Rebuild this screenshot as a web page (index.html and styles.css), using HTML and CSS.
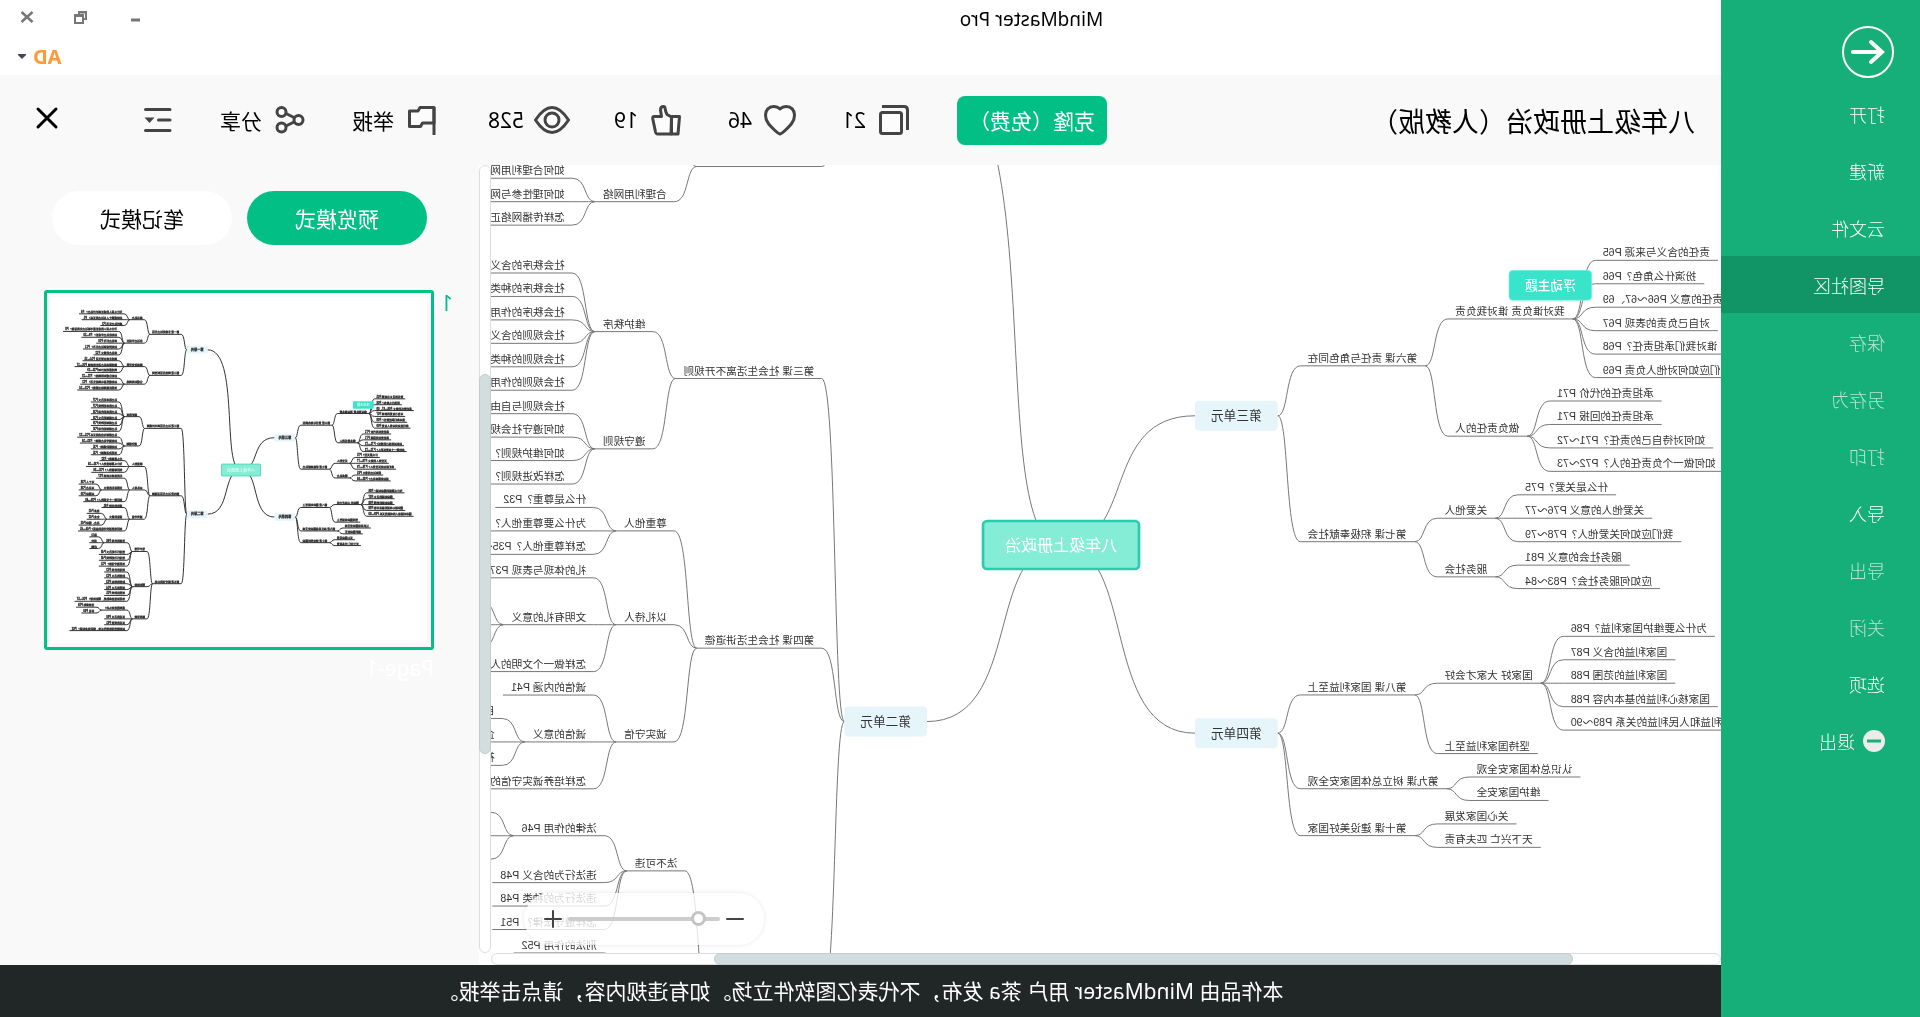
FILE: index.html
```html
<!DOCTYPE html>
<html lang="zh-CN">
<head>
<meta charset="utf-8">
<title>MindMaster Pro</title>
<link rel="stylesheet" href="styles.css">
</head>
<body>
<div class="app">
  <nav class="sidebar">
    <button class="back" aria-label="返回">
      <svg width="54" height="54" viewBox="0 0 54 54"><circle cx="27" cy="27" r="25"/><path class="arrow" d="M42 27H13M24 17L13 27L24 37"/></svg>
    </button>
    <a class="item" href="#">打开</a>
    <a class="item" href="#">新建</a>
    <a class="item" href="#">云文件</a>
    <a class="item active" href="#">导图社区</a>
    <a class="item dim" href="#">保存</a>
    <a class="item dim" href="#">另存为</a>
    <a class="item dim" href="#">打印</a>
    <a class="item" href="#">导入</a>
    <a class="item dim" href="#">导出</a>
    <a class="item dim" href="#">关闭</a>
    <a class="item" href="#">选项</a>
    <a class="item" href="#"><svg class="exit" width="22" height="22" viewBox="0 0 22 22"><circle cx="11" cy="11" r="11"/><path d="M4 11H18"/></svg>退出</a>
  </nav>

  <div class="main">
    <header class="titlebar">
      <div class="row">
        <h1 class="apptitle">MindMaster Pro</h1>
        <div class="wincontrols">
          <button aria-label="最小化"><svg width="14" height="14" viewBox="0 0 14 14"><path d="M2 10H11" stroke-width="3"/></svg></button>
          <button aria-label="还原"><svg width="14" height="14" viewBox="0 0 14 14"><path d="M5 9H2V2H9V5M1 2.500H10" /><path d="M5 5H13V13H5ZM5 6H13"/></svg></button>
          <button aria-label="关闭窗口"><svg width="14" height="14" viewBox="0 0 14 14"><path d="M1.500 2L12.500 12M12.500 2L1.500 12" stroke-width="2.500"/></svg></button>
        </div>
      </div>
      <div class="row account">
        <button class="user">AD<svg width="8" height="5" viewBox="0 0 8 5"><path d="M0 0H8V1L4 5L0 1Z"/></svg></button>
      </div>
    </header>

    <div class="toolbar">
      <h2 class="doctitle">八年级上册政治（人教版）</h2>
      <button class="clone">克隆（免费）</button>
      <div class="actions">
        <button class="action"><svg class="icon" viewBox="0 0 36 36"><path d="M30 4.500H8Q4.500 4.500 4.500 8V28"/><rect class="blank" x="10.500" y="10.500" width="21" height="21" rx="2"/></svg>21</button>
        <button class="action"><svg class="icon" viewBox="0 0 36 36"><path class="blank" d="M18 32Q16 31.500 13 28.500C7 23 3.500 19 3.500 13C3.500 8 7 4.500 11.500 4.500C14.500 4.500 16.500 5.500 18 7C19.500 5.500 21.500 4.500 24.500 4.500C29 4.500 32.500 8 32.500 13C32.500 19 29 23 23 28.500Q20 31.500 18 32Z"/></svg>46</button>
        <button class="action"><svg class="icon" viewBox="0 0 36 36"><path class="blank" d="M12.500 15L17 12.500Q18.500 10 19 6Q19.200 4.500 20.500 4.500Q23.500 4.500 23.500 8L22.500 14.500H30Q31.500 14.500 31.300 16.500L28.500 30Q28 32 26.500 32H13Z"/><path class="blank" d="M4.500 14.500H12.500V32H6Z"/></svg>19</button>
        <button class="action wide"><svg class="icon" viewBox="0 0 36 36"><path class="blank" d="M1.500 18C8 8 13 5.500 18 5.500S28 8 34.500 18C28 28 23 30.500 18 30.500S8 28 1.500 18Z"/><circle class="blank" cx="18" cy="18" r="7"/></svg>528</button>
        <button class="action"><svg class="icon" viewBox="0 0 36 36"><path class="blank" d="M6 21V5.500H20L22 9H30.500V24.500H19.500L17.500 21Z"/><path d="M6 5V33"/></svg>举报</button>
        <button class="action"><svg class="icon" viewBox="0 0 36 36"><path d="M14 15.500L22 11.500M14 20L22 24"/><circle class="blank" cx="9.500" cy="18" r="4.500"/><circle class="blank" cx="26.500" cy="10" r="4.500"/><circle class="blank" cx="26.500" cy="25.500" r="4.500"/></svg>分享</button>
        <button class="action" aria-label="目录"><svg class="icon" viewBox="0 0 36 36"><path stroke-linecap="round" d="M6 7.500H30.500M6 18H17.500M6 28.500H30.500"/><path class="solid" d="M21.500 15.500H31.500L26.500 21Z"/></svg></button>
        <button class="action close" aria-label="关闭"><svg class="icon" viewBox="0 0 36 36"><path stroke-linecap="round" d="M9 7L27 25M27 7L9 25"/></svg></button>
      </div>
    </div>

    <div class="workspace">
      <div class="canvas">
        <svg class="map"><g id="map"></g></svg>
        <div class="zoombar">
          <button aria-label="缩小"><svg width="18" height="18" viewBox="0 0 18 18"><path d="M1 9H17"/></svg></button>
          <input type="range" min="0" max="100" value="10" aria-label="缩放">
          <button aria-label="放大"><svg width="18" height="18" viewBox="0 0 18 18"><path d="M1 9H17M9 1V17"/></svg></button>
        </div>
      </div>
      <div class="scroll vertical"><div class="thumb"></div></div>
      <div class="scroll horizontal"><div class="thumb"></div></div>
      <aside class="panel">
        <div class="modes">
          <button class="mode on">预览模式</button>
          <button class="mode">笔记模式</button>
        </div>
        <div class="page">
          <span class="num">1</span>
          <button class="preview" aria-label="Page-1"><svg viewBox="0 0 376 346"><use href="#map"/></svg></button>
          <span class="name">Page-1</span>
        </div>
      </aside>
    </div>

    <footer class="notice">本作品由 MindMaster 用户 茶a 发布，不代表亿图软件立场。如有违规内容，请点击举报。</footer>
  </div>
</div>
<script src="map.js"></script>
</body>
</html>
```

FILE: styles.css
```css
* { box-sizing: border-box; }

body {
  margin: 0;
  background: #fff;
  color: #000;
  font-family: "Noto Sans", "Noto Sans CJK SC", sans-serif;
  font-size: 21px;
}

button {
  margin: 0;
  padding: 0;
  border: 0;
  background: none;
  color: inherit;
  font: inherit;
  cursor: pointer;
}

svg { display: block; flex: none; }

h1, h2 { margin: 0; font-weight: 400; }

.app {
  display: flex;
  height: 100vh;
  transform: scaleX(-1);
}

/* file menu */
.sidebar {
  flex: 0 0 199px;
  background: #16ae79;
  color: #fff;
  font-family: "Noto Sans CJK SC", sans-serif;
  font-size: 18px;
  font-weight: 300;
}

.back { display: block; margin: 25px 0 6px 25px; }
.back svg { fill: none; stroke: #fff; stroke-width: 2; }
.back .arrow { stroke-width: 4; stroke-linecap: round; }

.item {
  display: flex;
  align-items: center;
  gap: 8px;
  height: 57px;
  padding: 0 0 0 35px;
  color: #fff;
  text-decoration: none;
}
.item.active { background: #129566; }
.item.dim { color: #b5e5d3; }
.exit { fill: #ececec; stroke: #16ae79; stroke-width: 3; }
.exit circle { stroke: none; }

/* window frame */
.main {
  flex: 1;
  min-width: 0;
  display: flex;
  flex-direction: column;
}

.titlebar { flex: 0 0 75px; }
.row { display: flex; align-items: center; height: 34px; }
.apptitle {
  flex: 1;
  padding-top: 4px;
  text-align: center;
  font-size: 19px;
  line-height: 30px;
}
.wincontrols { flex: 0 0 342px; display: flex; justify-content: flex-end; }
.wincontrols button { width: 54px; display: flex; justify-content: center; }
.wincontrols svg { fill: none; stroke: #777; stroke-width: 2; }

.account { height: 41px; justify-content: flex-end; padding: 4px 18px 0 0; }
.user {
  display: flex;
  align-items: center;
  gap: 7px;
  color: #ff9a35;
  font-size: 20px;
  font-weight: 700;
  line-height: 24px;
}
.user svg { fill: #445; }

/* document toolbar */
.toolbar {
  flex: 0 0 90px;
  display: flex;
  align-items: center;
  padding: 0 29px 0 26px;
  background: #f9f9f9;
}
.doctitle {
  flex: 1;
  font-family: "Noto Sans CJK SC", sans-serif;
  font-size: 27px;
  white-space: nowrap;
}
.clone {
  width: 150px;
  height: 49px;
  margin-right: 45px;
  border-radius: 8px;
  background: #02bf86;
  color: #fff;
  white-space: nowrap;
}
.actions { display: flex; gap: 44px; }
.action { display: flex; align-items: center; gap: 10px; height: 36px; }
.action.wide { width: 86px; }
.action.close { margin-left: 31px; }
.icon {
  width: 36px;
  height: 36px;
  fill: none;
  stroke: #444;
  stroke-width: 3;
  stroke-linejoin: round;
}
.icon .blank { fill: #fcfcfc; }
.icon .solid { fill: #444; stroke: none; }
.close .icon { stroke: #000; }

/* work area */
.workspace {
  flex: 1;
  min-height: 0;
  display: grid;
  grid-template-columns: minmax(0, 1fr) 12px 479px;
  grid-template-rows: minmax(0, 1fr) 12px;
}
.canvas { position: relative; overflow: hidden; }
.map { width: 100%; height: 100%; }
.panel { grid-column: 3; grid-row: 1 / 3; background: #f9f9f9; }

.scroll { display: grid; border: 1px solid #ddd; border-radius: 6px; background: #fff; }
.scroll .thumb { border-radius: 6px; background: #d3dcde; border: 1px solid #c3cccd; margin: -1px; }
.vertical { grid-column: 2; grid-row: 1; grid-template-rows: 210fr 378fr 200fr; }
.vertical .thumb { grid-row: 2; }
.horizontal { grid-column: 1; grid-row: 2; grid-template-columns: 148fr 859fr 223fr; }
.horizontal .thumb { grid-column: 2; }

.zoombar {
  position: absolute;
  right: 33px;
  bottom: 8px;
  display: flex;
  align-items: center;
  gap: 6px;
  width: 240px;
  height: 52px;
  padding: 0 20px;
  border-radius: 26px;
  background: rgba(255, 255, 255, .8);
  box-shadow: 0 0 5px rgba(0, 0, 0, .1);
}
.zoombar svg { fill: none; stroke: #444; stroke-width: 2; stroke-linecap: round; }
.zoombar input {
  flex: 1;
  min-width: 0;
  height: 16px;
  margin: 0;
  appearance: none;
  background: none;
}
.zoombar input::-webkit-slider-runnable-track { height: 4px; border-radius: 2px; background: #ccc; }
.zoombar input::-webkit-slider-thumb {
  appearance: none;
  width: 15px;
  height: 15px;
  margin-top: -6px;
  border: 3px solid #c4c4c4;
  border-radius: 50%;
  background: #fff;
}

/* mind map */
#map {
  font-family: "Liberation Sans", "Noto Sans CJK SC", sans-serif;
  font-size: 16px;
  fill: #333;
}
#map path {
  fill: none;
  stroke: var(--line, #777);
  stroke-width: 1px;
  vector-effect: non-scaling-stroke;
}
#map .unit rect { fill: #e6f5f9; stroke: none; }
#map .unit text, #map .float text { font-size: 19px; text-anchor: middle; }
#map .root rect { fill: #85ecd6; stroke: #2dcbad; stroke-width: 4px; }
#map .root text { font-size: 24px; text-anchor: middle; fill: #fff; stroke: none; }
#map .float rect { fill: #38e5cb; stroke: #7ff0df; stroke-width: 1px; }
#map .float text { fill: #fff; font-weight: 500; stroke: none; }

/* page list */
.modes { display: flex; justify-content: center; gap: 15px; padding: 26px 0 45px; }
.mode { width: 180px; height: 54px; border-radius: 27px; background: #fff; }
.mode.on { background: #02bf86; color: #fff; }

.page {
  display: grid;
  grid-template-columns: 19px 390px;
  justify-content: start;
  padding-left: 26px;
  line-height: 26px;
}
.num { color: #02bf86; }
.preview {
  height: 360px;
  padding: 4px;
  border: 3px solid #02bf86;
  border-radius: 3px;
}
.preview svg { width: 100%; height: 100%; background: #fff; }
.preview use {
  --line: #333;
  transform: translate(186px, 173px) scale(.25) translate(-660px, -380px);
  stroke: #333;
  stroke-width: 2px;
}
.name { grid-column: 2; margin-top: 5px; color: #fff; }

.notice {
  flex: 0 0 52px;
  background: #212627;
  color: #fff;
  text-align: center;
  line-height: 52px;
  white-space: nowrap;
}
```

FILE: map.js
```js
// Map units: 16 units of text are drawn at the current zoom of two thirds.
const ZOOM = 2 / 3;
const ORIGIN = [660, 380];   // root topic on the canvas, px
const ROW = 35.17;           // distance between two leaf lines
const NEAR = 201;            // root centre to the near edge of a unit box
const BOX_W = 124, BOX_H = 45;

const t = (text, ...children) => ({ text, children });

const units = [
  { text: '第一单元', dir: 1, top: -937, bend: [120, 5], children: [
    t('第一课 丰富的社会生活',
      t('我与社会', t('为什么说人的成长离不开社会？ P4'), t('如何理解个人与社会的关系？ P5'), t('感受社会生活 P3')),
      t('在社会中成长', t('为什么说人的成长是不断社会化的过程？ P8'), t('如何在社会中成长？ P9～10'), t('亲社会行为 P10'), t('如何养成亲社会行为？ P11'), t('亲社会的意义 P12'))),
    t('第二课 网络生活新空间',
      t('网络改变世界', t('网络丰富日常生活 P14～15'), t('网络推动社会进步的表现 P16～17'), t('网络是把双刃剑 P18～19')),
      t('合理利用网络', t('如何合理利用网络？ P21～22'), t('如何理性参与网络生活？ P22'), t('怎样传播网络正能量？ P23～24'))),
  ] },
  { text: '第二单元', dir: 1, top: -408, bend: [115, 57], children: [
    t('第三课 社会生活离不开规则',
      t('维护秩序', t('社会秩序的含义 P27'), t('社会秩序的种类 P27'), t('社会秩序的作用 P28'), t('社会规则的含义 P29'), t('社会规则的种类 P29'), t('社会规则的作用 P30')),
      t('遵守规则', t('社会规则与自由的关系 P31～32'), t('如何遵守社会规则？ P33～34'), t('如何维护规则？ P35'), t('怎样改进规则？ P35'))),
    t('第四课 社会生活讲道德',
      t('尊重他人', t('什么是尊重？P32'), t('为什么要尊重他人？P33～34'), t('怎样尊重他人？P35～36')),
      t('以礼待人', t('礼的体现与表现 P37'),
        t('文明有礼的意义', t('对个人 P38'), t('对社会 P38'), t('对国家 P39')),
        t('怎样做一个文明的人？P39～40')),
      t('诚实守信', t('诚信的内涵 P41'),
        t('诚信的意义', t('自身 P42'), t('企业 P42'), t('社会、国家 P43')),
        t('怎样培养诚实守信的品质？P44～45'))),
    t('第五课 做守法的公民',
      t('法不可违',
        t('法律的作用 P46', t('指引'), t('评价'), t('保障')),
        t('违法行为的含义 P48'), t('违法行为的种类 P48'), t('怎样遵守法律？ P51')),
      t('预防犯罪', t('刑法的作用 P52'), t('犯罪的含义 P53'), t('犯罪的特征 P53'), t('刑罚的含义 P54'), t('刑罚的种类 P55'), t('怎样加强自我防范，预防犯罪？ P56～57')),
      t('善用法律',
        t('遇到侵害怎么办？', t('法律救助 P59'), t('诉讼 P60')),
        t('诉讼的含义 P60'), t('诉讼的类型 P61'), t('如何同违法犯罪作斗争，维护自身利益？ P62'))),
  ] },
  { text: '第三单元', dir: -1, top: -427, bend: [115, 57], children: [
    t('第六课 责任与角色同在',
      t('我对谁负责 谁对我负责', t('责任的含义与来源 P65'), t('扮演什么角色？P66'), t('承担责任的意义 P66～67、69'), t('对自己负责的表现 P67'), t('谁对我们承担责任？P68'), t('我们应如何对他人负责 P69')),
      t('做负责任的人', t('承担责任的代价 P71'), t('承担责任的回报 P71'), t('如何对待自己的责任？P71～72'), t('如何做一个负责任的人？P72～73'))),
    t('第七课 积极奉献社会',
      t('关爱他人', t('什么是关爱？P75'), t('关爱他人的意义 P76～77'), t('我们应如何关爱他人？P78～79')),
      t('服务社会', t('服务社会的意义 P81'), t('应如何服务社会？P83～84'))),
  ] },
  { text: '第四单元', dir: -1, top: 137, bend: [115, 57], children: [
    t('第八课 国家利益至上',
      t('国家好 大家才会好', t('为什么要维护国家利益？P86'), t('国家利益的含义 P87'), t('国家利益的范围 P88'), t('国家核心利益的基本内容 P88'), t('国家利益和人民利益的关系 P89～90')),
      t('坚持国家利益至上')),
    t('第九课 树立总体国家安全观', t('认识总体国家安全观'), t('维护国家安全')),
    t('第十课 建设美好国家', t('关心国家发展'), t('天下兴亡 匹夫有责')),
  ] },
];

const map = document.getElementById('map');
map.setAttribute('transform', `translate(${ORIGIN}) scale(${ZOOM})`);

function add(name, attrs, parent = map, text) {
  const el = document.createElementNS('http://www.w3.org/2000/svg', name);
  for (const key in attrs) el.setAttribute(key, attrs[key]);
  if (text) el.textContent = text;
  parent.appendChild(el);
  return el;
}

// Leaves take one row each; a branch sits midway between its outer leaves.
function measure(node, top, row) {
  if (!node.children.length) {
    node.y = top + row * ROW;
    return 1;
  }
  let used = 0;
  for (const child of node.children) used += measure(child, top, row + used);
  node.y = top + (row + (used - 1) / 2) * ROW;
  return used;
}

function drawBranch(node, px, py, dir) {
  const label = add('text', {
    x: px + 45 * dir, y: node.y - 6, 'text-anchor': dir > 0 ? 'start' : 'end',
  }, map, node.text);
  const end = px + (57 + label.getComputedTextLength()) * dir;
  const start = px + 34 * dir;
  add('path', { d: `M${px} ${py}C${px + 17 * dir} ${py} ${px + 11 * dir} ${node.y} ${start} ${node.y}H${end}` });
  for (const child of node.children) drawBranch(child, end, node.y, dir);
}

function drawBox(cls, x, y, w, h, text, drop) {
  const g = add('g', { class: cls });
  add('rect', { x, y, width: w, height: h, rx: 6 }, g);
  add('text', { x: x + w / 2, y: y + h / 2 + drop }, g, text);
}

for (const unit of units) {
  measure(unit, unit.top, 0);
  const y = unit.y - 13;
  const { dir, bend } = unit;
  add('path', { d: `M0 0C${bend[0] * dir} 0 ${bend[1] * dir} ${y} ${NEAR * dir} ${y}` });
  for (const child of unit.children) drawBranch(child, (NEAR + BOX_W) * dir, y, dir);
  drawBox('unit', dir > 0 ? NEAR : -NEAR - BOX_W, y - BOX_H / 2, BOX_W, BOX_H, unit.text, 7);
}
drawBox('root', -117, -36, 234, 72, '八年级上册政治', 9);
drawBox('float', -796, -412, BOX_W, BOX_H, '浮动主题', 7);
```
